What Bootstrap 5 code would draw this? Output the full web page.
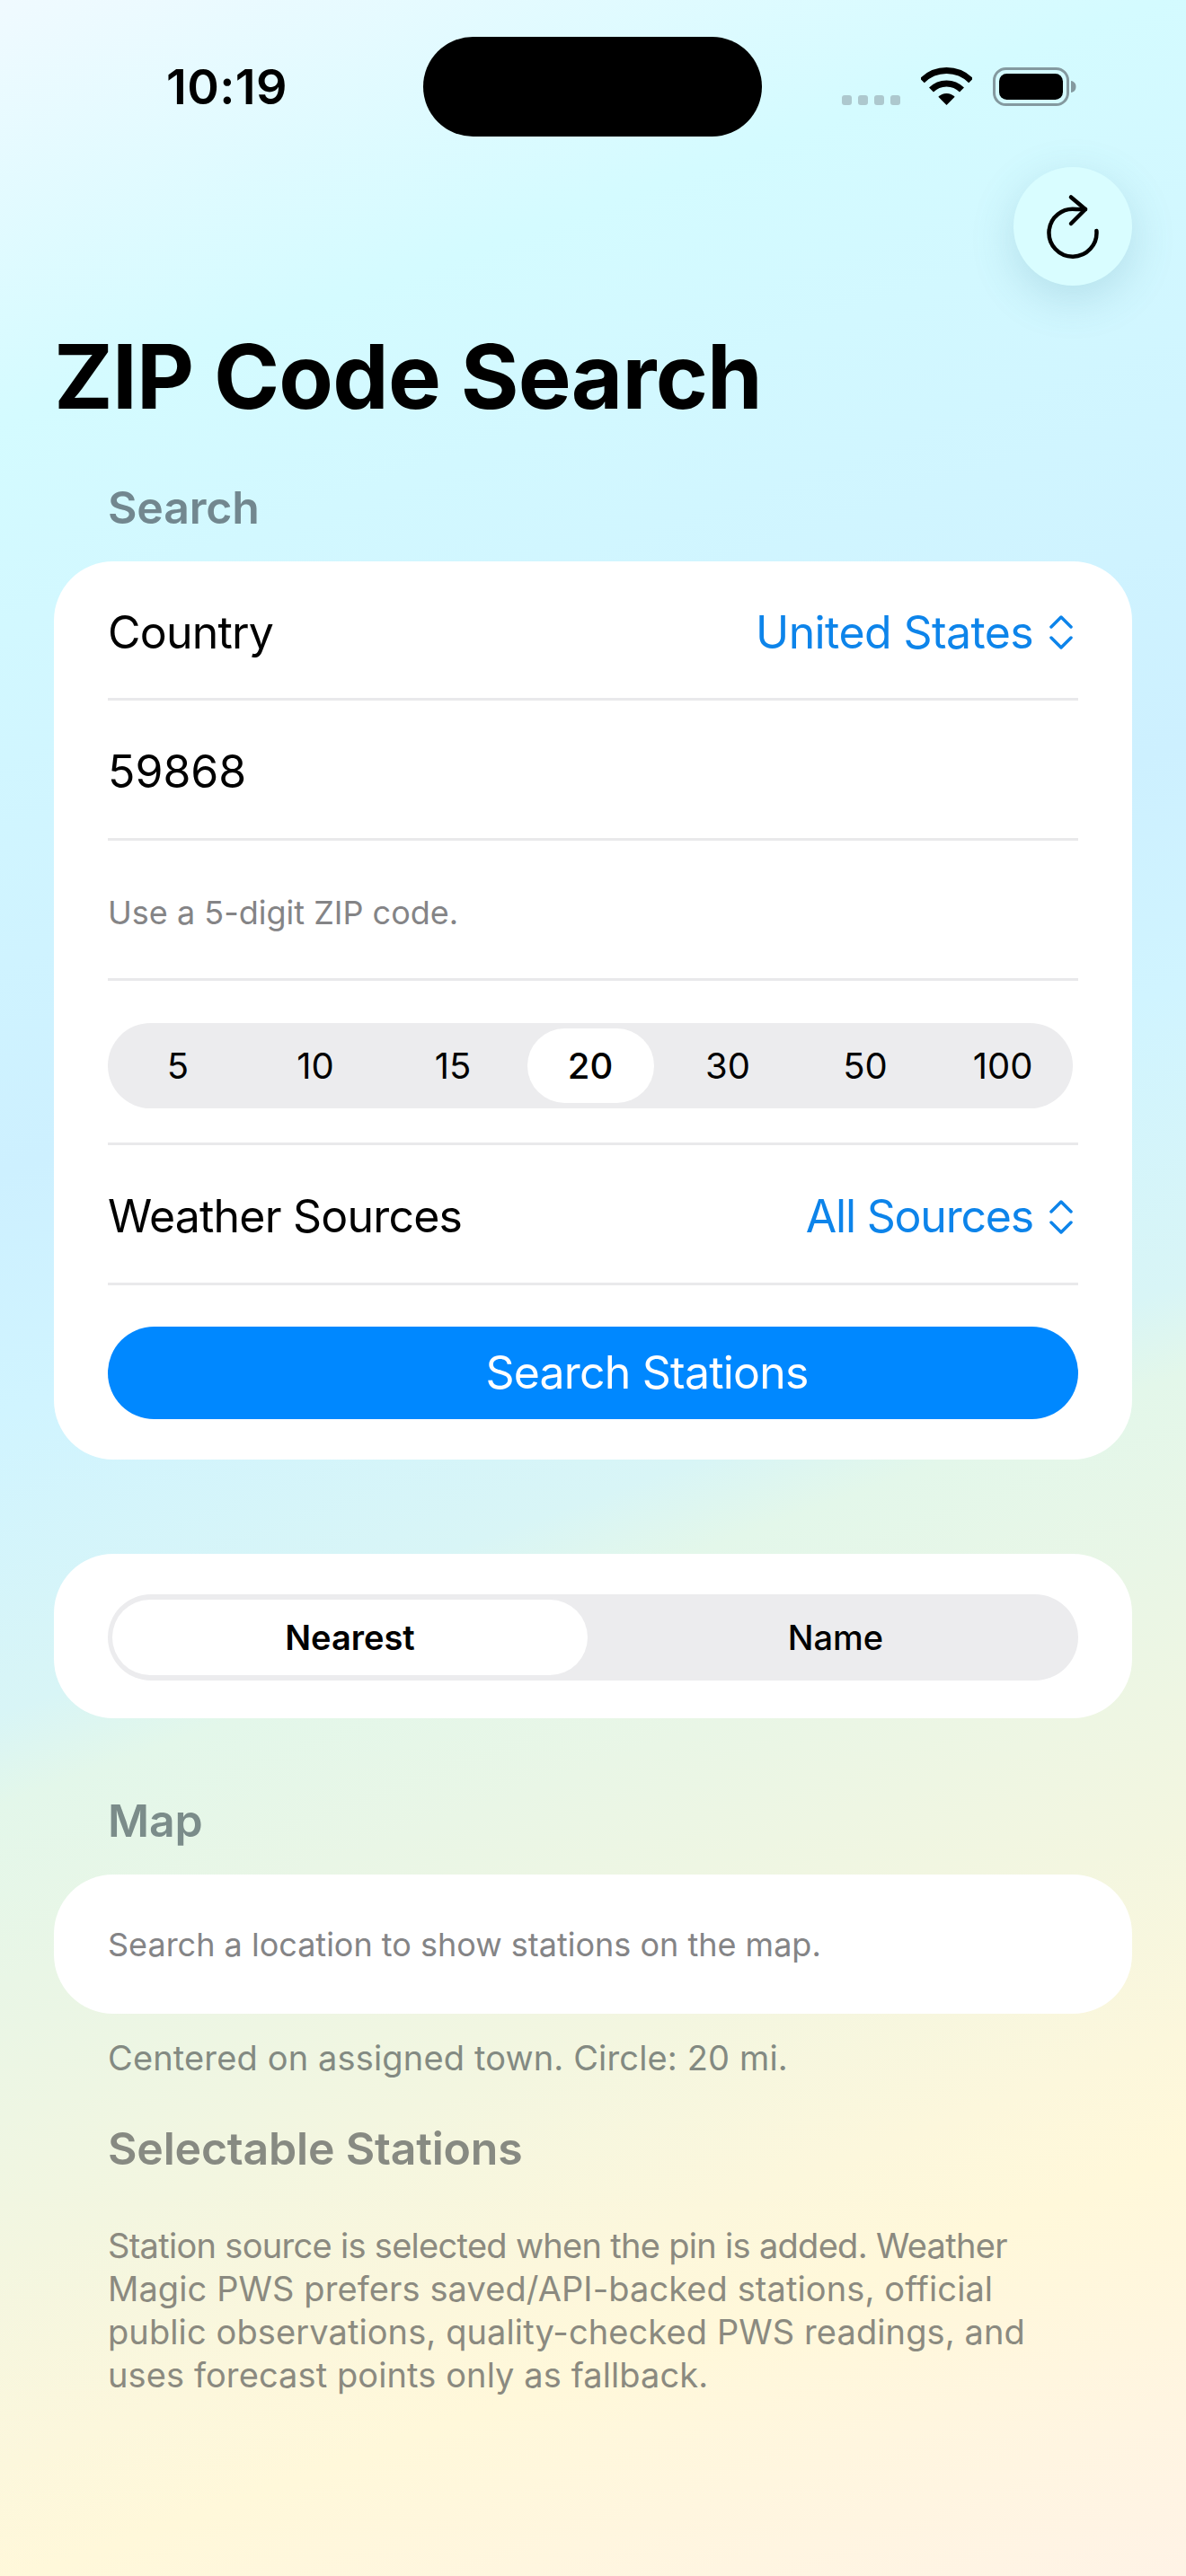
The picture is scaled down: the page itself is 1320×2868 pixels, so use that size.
<!DOCTYPE html>
<html lang="en">
<head>
    <meta charset="UTF-8">
    <meta name="viewport" content="width=device-width, initial-scale=1.0">
    <title>ZIP Code Search</title>
    <link href="https://cdn.jsdelivr.net/npm/bootstrap@5.3.0/dist/css/bootstrap.min.css" rel="stylesheet">
    <style>
        html, body { margin: 0; }
        body {
            font-family: "Inter", "Liberation Sans", sans-serif;
            color: #000;
            background: #fff;
        }
        .phone-page {
            width: 1320px;
            height: 2868px;
            overflow: hidden;
            padding: 0 60px;
            background: linear-gradient(160deg, #f0faff 0%, #d4fbff 14%, #cdf0ff 39%, #d0f4ff 47%, #d8f5f6 57%, #e3f7ea 60%, #e9f6e6 66%, #f3f6e0 75%, #fcf7dc 82%, #fff8da 86%, #fff3e6 100%);
        }
        .status-row { height: 186px; position: relative; }
        .status-time { position: absolute; left: 125px; top: 66px; font-size: 54px; line-height: 62px; font-weight: 600; letter-spacing: .4px; }
        .island { position: absolute; left: 411px; top: 41px; width: 377px; height: 111px; border-radius: 56px; background: #000; }
        .status-icons { position: absolute; left: 877px; top: 75px; gap: 23px; }
        .signal-dots { gap: 7px; margin-top: 31px; }
        .signal-dots span { width: 11px; height: 11px; border-radius: 3px; background: #adc8ce; }
        .refresh-row { height: 132px; }
        .refresh-btn {
            width: 132px; height: 132px; border-radius: 50%; background: #d9fdff; border: 0; padding: 0;
            box-shadow: 0 14px 50px rgba(60,130,150,.2);
        }
        .page-title { font-size: 99px; line-height: 112px; font-weight: 700; letter-spacing: -.8px; margin: 45px 0 0 0; }
        .group-head { font-size: 50px; line-height: 60px; font-weight: 600; margin: 0 0 0 60px; letter-spacing: -.2px; }
        .head-search { color: #72878f; margin-top: 60px; }
        .head-map { color: #7b8c8a; margin-top: 84px; }
        .head-stations { color: #878a82; margin-top: 47px; }
        .white-box { background: #fff; border-radius: 66px; padding: 0 60px; }
        .box-form { margin-top: 30px; height: 1000px; }
        .box-sort { margin-top: 105px; height: 183px; padding-top: 45px; }
        .box-map { margin-top: 30px; height: 155px; }
        .form-line { border-bottom: 3px solid #e9e9eb; }
        .line-country { height: 155px; padding-top: 6px; }
        .line-zip { height: 156px; padding-top: 6px; font-size: 50px; }
        .line-help { height: 156px; padding-top: 6px; }
        .line-radius { height: 183px; padding-top: 47px; }
        .line-sources { height: 156px; padding-top: 6px; }
        .line-label { font-size: 50px; letter-spacing: -.8px; }
        .picker-value { font-size: 50px; letter-spacing: -.6px; color: #0d84ea; gap: 18px; padding-right: 6px; }
        .picker-tight { letter-spacing: -1.2px; }
        .hint-text { font-size: 36px; color: #848486; }
        .radius-track { height: 95px; width: 1074px; border-radius: 48px; background: #ececee; padding: 6px 1.5px; }
        .radius-item { flex: 1 1 0; height: 83px; margin: 0 6px; border-radius: 42px; font-size: 40px; }
        .radius-item.on { background: #fff; font-weight: 500; }
        .action-btn {
            display: block; width: 100%; height: 103px; margin-top: 46px; border: 0; border-radius: 52px;
            background: #0088ff; color: #fff; font-size: 50px; letter-spacing: -.8px; line-height: 103px; padding: 0 0 0 120px;
        }
        .sort-track { height: 96px; border-radius: 48px; background: #ececee; padding: 6px 5px; font-size: 38px; font-weight: 500; }
        .sort-item { height: 84px; border-radius: 42px; }
        .sort-on { width: 529px; background: #fff; font-weight: 600; }
        .sort-off { flex: 1 1 0; padding-left: 11px; }
        .foot-note { font-size: 38px; line-height: 48px; letter-spacing: .15px; color: #838a82; margin: 25px 0 0 60px; }
        .about-text { font-size: 38px; line-height: 48px; letter-spacing: .1px; color: #8b8a80; margin: 54px 0 0 60px; width: 1120px; }
        .about-first { letter-spacing: -.7px; }
    </style>
</head>
<body>
    <div class="phone-page">
        <!-- Barra de estado -->
        <div class="status-row">
            <div class="status-time">10:19</div>
            <div class="island"></div>
            <div class="status-icons d-flex">
                <div class="signal-dots d-flex"><span></span><span></span><span></span><span></span></div>
                <svg width="57" height="42" viewBox="0 0 57 42" fill="none">
                    <path d="M1.3 14.8A38.5 38.5 0 0 1 55.7 14.8" stroke="#000" stroke-width="7"/>
                    <path d="M11.5 25A24 24 0 0 1 45.5 25" stroke="#000" stroke-width="7"/>
                    <path d="M28.5 42L19.3 32.8A13 13 0 0 1 37.7 32.8Z" fill="#000"/>
                </svg>
                <svg width="93" height="43" viewBox="0 0 93 43" fill="none">
                    <rect x="1.5" y="1.5" width="82" height="40" rx="13" stroke="#84999f" stroke-width="3"/>
                    <rect x="7" y="7" width="71" height="29" rx="8.5" fill="#000"/>
                    <path d="M87 15c3.500.6 5.500 3 5.500 6.500s-2 6-5.500 6.500z" fill="#84999f"/>
                </svg>
            </div>
        </div>

        <div class="refresh-row d-flex justify-content-end">
            <button class="refresh-btn d-flex align-items-center justify-content-center" type="button" aria-label="Refresh">
                <svg width="64" height="80" viewBox="0 0 64 80" fill="none" stroke="#000" stroke-width="4.500" stroke-linecap="round" stroke-linejoin="round">
                    <path d="M58.400 45A26.500 26.500 0 1 1 36 21H46"/>
                    <path d="M30 7.500L46 21L30 37"/>
                </svg>
            </button>
        </div>

        <h1 class="page-title">ZIP Code Search</h1>

        <h2 class="group-head head-search">Search</h2>
        <div class="white-box box-form">
            <div class="form-line line-country d-flex justify-content-between align-items-center">
                <span class="line-label">Country</span>
                <span class="picker-value d-flex align-items-center">United States
                    <svg width="26" height="38" viewBox="0 0 26 38" fill="none" stroke="#0d84ea" stroke-width="3.500" stroke-linecap="round" stroke-linejoin="round"><path d="M2 13L13 2L24 13M2 25L13 36L24 25"/></svg>
                </span>
            </div>
            <div class="form-line line-zip d-flex align-items-center">59868</div>
            <div class="form-line line-help d-flex align-items-center hint-text">Use a 5-digit ZIP code.</div>
            <div class="form-line line-radius">
                <div class="radius-track d-flex">
                    <div class="radius-item d-flex align-items-center justify-content-center">5</div>
                    <div class="radius-item d-flex align-items-center justify-content-center">10</div>
                    <div class="radius-item d-flex align-items-center justify-content-center">15</div>
                    <div class="radius-item on d-flex align-items-center justify-content-center">20</div>
                    <div class="radius-item d-flex align-items-center justify-content-center">30</div>
                    <div class="radius-item d-flex align-items-center justify-content-center">50</div>
                    <div class="radius-item d-flex align-items-center justify-content-center">100</div>
                </div>
            </div>
            <div class="form-line line-sources d-flex justify-content-between align-items-center">
                <span class="line-label">Weather Sources</span>
                <span class="picker-value picker-tight d-flex align-items-center">All Sources
                    <svg width="26" height="38" viewBox="0 0 26 38" fill="none" stroke="#0d84ea" stroke-width="3.500" stroke-linecap="round" stroke-linejoin="round"><path d="M2 13L13 2L24 13M2 25L13 36L24 25"/></svg>
                </span>
            </div>
            <button class="action-btn" type="button">Search Stations</button>
        </div>

        <div class="white-box box-sort">
            <div class="sort-track d-flex">
                <div class="sort-item sort-on d-flex align-items-center justify-content-center">Nearest</div>
                <div class="sort-item sort-off d-flex align-items-center justify-content-center">Name</div>
            </div>
        </div>

        <h2 class="group-head head-map">Map</h2>
        <div class="white-box box-map d-flex align-items-center"><span class="hint-text">Search a location to show stations on the map.</span></div>
        <p class="foot-note">Centered on assigned town. Circle: 20 mi.</p>

        <h2 class="group-head head-stations">Selectable Stations</h2>
        <p class="about-text"><span class="about-first">Station source is selected when the pin is added. Weather</span><br>Magic PWS prefers saved/API-backed stations, official<br>public observations, quality-checked PWS readings, and<br>uses forecast points only as fallback.</p>
    </div>
    <script src="https://cdn.jsdelivr.net/npm/bootstrap@5.3.0/dist/js/bootstrap.bundle.min.js"></script>
</body>
</html>
